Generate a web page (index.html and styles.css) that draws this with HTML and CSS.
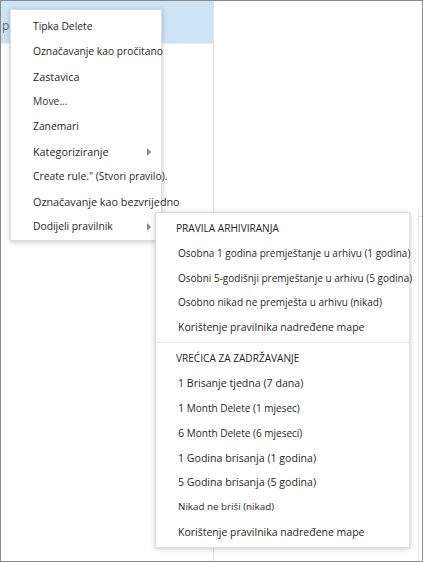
FILE: index.html
```html
<!DOCTYPE html>
<html lang="hr">
<head>
<meta charset="utf-8">
<title>Dodijeli pravilnik</title>
<link rel="stylesheet" href="styles.css">
</head>
<body>
<div class="frame">
  <div class="list">
    <div class="row row-selected"><span class="row-text">pe</span></div>
  </div>
  <div class="reading">
    <div class="reading-main"></div>
    <div class="gutter"><div class="gutter-top"></div></div>
  </div>

  <div class="menu menu-primary">
    <div class="item">Tipka Delete</div>
    <div class="item">Označavanje kao pročitano</div>
    <div class="item item-lg">Zastavica</div>
    <div class="item item-muted">Move...</div>
    <div class="item">Zanemari</div>
    <div class="item item-sub"><span class="item-lg">Kategoriziranje</span><span class="arrow"></span></div>
    <div class="item">Create rule." (Stvori pravilo).</div>
    <div class="item item-lg">Označavanje kao bezvrijedno</div>
    <div class="item item-sub"><span>Dodijeli pravilnik</span><span class="arrow"></span></div>
  </div>

  <div class="menu menu-sub">
    <div class="group-title">PRAVILA ARHIVIRANJA</div>
    <div class="sub-item">Osobna 1 godina premještanje u arhivu (1 godina)</div>
    <div class="sub-item">Osobni 5-godišnji premještanje u arhivu (5 godina)</div>
    <div class="sub-item">Osobno nikad ne premješta u arhivu (nikad)</div>
    <div class="sub-item sub-lg">Korištenje pravilnika nadređene mape</div>
    <div class="separator"></div>
    <div class="group-title">VREĆICA ZA ZADRŽAVANJE</div>
    <div class="sub-item sub-xl">1 Brisanje tjedna (7 dana)</div>
    <div class="sub-item"><span class="num">1</span> Month Delete (1 mjesec)</div>
    <div class="sub-item"><span class="num">6</span> Month Delete (6 mjeseci)</div>
    <div class="sub-item sub-xl">1 Godina brisanja (1 godina)</div>
    <div class="sub-item sub-xl">5 Godina brisanja (5 godina)</div>
    <div class="sub-item sub-sm">Nikad ne briši (nikad)</div>
    <div class="sub-item sub-lg">Korištenje pravilnika nadređene mape</div>
  </div>
</div>
</body>
</html>
```

FILE: styles.css
```css
html, body {
  margin: 0;
  padding: 0;
  background: #ffffff;
}

body {
  font-family: "Open Sans", "Noto Sans", sans-serif;
  color: #1f1f1f;
}

.frame {
  position: relative;
  width: 423px;
  height: 562px;
  box-sizing: border-box;
  border: 1px solid #8a8a8a;
  display: flex;
  overflow: hidden;
  background: #ffffff;
}

.list {
  width: 212px;
  flex: none;
  border-right: 1px solid #e1e1e1;
}

.row {
  height: 43px;
  box-sizing: border-box;
}

.row-selected {
  background: #cde4f6;
  border-bottom: 1px solid #e4eef8;
}

.row-text {
  display: block;
  padding: 17px 0 0 1px;
  font-size: 12px;
  line-height: 16px;
  color: #6a6a6a;
  white-space: nowrap;
}

.reading {
  flex: 1;
  display: flex;
}

.reading-main {
  flex: 1;
}

.gutter {
  width: 3px;
  margin-top: 208px;
  border-left: 1px solid #e3e3e3;
}

.gutter-top {
  height: 7px;
  border-bottom: 1px solid #e3e3e3;
}

.menu {
  position: absolute;
  box-sizing: border-box;
  background: #ffffff;
  border: 1px solid #dedede;
  box-shadow: 0 1px 5px rgba(0, 0, 0, 0.22);
}

.menu-primary {
  left: 9px;
  top: 8px;
  width: 152px;
  padding: 4px 0 1px 0;
}

.item {
  height: 25px;
  line-height: 25px;
  padding: 0 10px 0 22px;
  font-size: 10.3px;
  white-space: nowrap;
  display: flex;
  align-items: center;
  justify-content: space-between;
}

.item-lg {
  font-size: 10.8px;
}

.item-muted {
  color: #383838;
}

.arrow {
  width: 0;
  height: 0;
  border-left: 4px solid #888888;
  border-top: 4px solid transparent;
  border-bottom: 4px solid transparent;
}

.menu-sub {
  left: 154px;
  top: 211px;
  width: 255px;
  padding: 3px 0 2px 0;
}

.group-title {
  height: 24.8px;
  line-height: 24.8px;
  padding-left: 20px;
  font-size: 10.1px;
  color: #1f1f1f;
  white-space: nowrap;
}

.sub-item {
  height: 24.8px;
  line-height: 24.8px;
  padding-left: 22px;
  font-size: 10px;
  white-space: nowrap;
}

.sub-lg {
  font-size: 10.5px;
}

.sub-xl {
  font-size: 10.6px;
}

.sub-sm {
  font-size: 9.8px;
}

.num {
  font-size: 10.8px;
}

.separator {
  height: 1px;
  margin: 2px 0 3.5px 0;
  background: #e2e2e2;
}
```
